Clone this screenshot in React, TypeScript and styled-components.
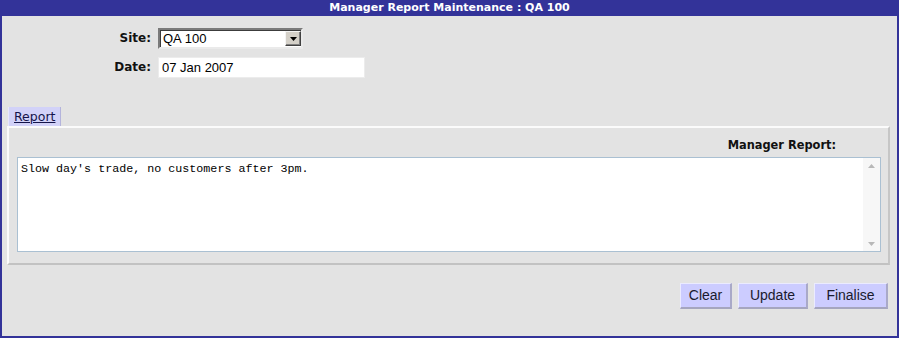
import React from 'react';
import styled, { createGlobalStyle } from 'styled-components';

const GlobalStyle = createGlobalStyle`
  html, body {
    margin: 0;
    padding: 0;
    background: #e3e3e3;
  }
  * {
    box-sizing: border-box;
  }
`;

const Frame = styled.div`
  width: 899px;
  height: 338px;
  display: flex;
  flex-direction: column;
  background: #e3e3e3;
  border: 2px solid #333399;
  border-top: none;
  font-family: 'DejaVu Sans', Verdana, sans-serif;
`;

const TitleBar = styled.div`
  height: 16px;
  margin: 0 -2px;
  background: #333399;
  color: #fff;
  font-size: 11px;
  font-weight: bold;
  line-height: 15px;
  text-align: center;
`;

const FormGrid = styled.div`
  display: grid;
  grid-template-columns: 149px auto;
  column-gap: 7px;
  row-gap: 8px;
  margin-top: 12px;
  justify-content: start;
`;

const Label = styled.label`
  font-size: 12px;
  font-weight: bold;
  color: #111;
  text-align: right;
  padding-top: 3px;
`;

const SelectBox = styled.div`
  width: 145px;
  height: 21px;
  display: flex;
  align-items: stretch;
  background: #fff;
  border-style: solid;
  border-width: 2px;
  border-color: #7a7a7a #eaeaea #eaeaea #7a7a7a;
  box-shadow: inset 1px 1px 0 #3c3c3c;
`;

const SelectText = styled.span`
  flex: 1;
  padding: 1px 0 0 3px;
  font-family: 'Liberation Sans', Arial, sans-serif;
  font-size: 13px;
  line-height: 16px;
  color: #000;
`;

const ArrowButton = styled.span`
  width: 16px;
  margin: 1px 0 1px 0;
  display: flex;
  align-items: center;
  justify-content: center;
  background: #d4d0c8;
  border-style: solid;
  border-width: 1px;
  border-color: #f4f4f4 #404040 #404040 #f4f4f4;
  box-shadow: inset -1px -1px 0 #808080;
`;

const TextInput = styled.div`
  width: 207px;
  height: 21px;
  background: #fff;
  border: 1px solid #ececec;
  padding: 2px 0 0 3px;
  font-family: 'Liberation Sans', Arial, sans-serif;
  font-size: 13px;
  line-height: 16px;
  color: #000;
`;

const TabRow = styled.div`
  display: flex;
  margin: 29px 0 0 6px;
`;

const Tab = styled.a`
  height: 19px;
  padding: 1px 5px 0 5px;
  background: #d2d2f8;
  border-left: 1px solid #e6e6ff;
  border-right: 1px solid #b4b4dc;
  font-size: 12.5px;
  line-height: 17px;
  color: #14144a;
  text-decoration: underline;
`;

const Panel = styled.div`
  margin: 0 7px 0 5px;
  padding: 10px 7px 11px 8px;
  border-style: solid;
  border-width: 2px;
  border-color: #fbfbfb #c6c6c6 #c2c2c2 #fbfbfb;
  display: flex;
  flex-direction: column;
`;

const PanelLabel = styled.div`
  font-size: 11.4px;
  font-weight: bold;
  color: #111;
  text-align: right;
  padding-right: 45px;
  line-height: 15px;
  margin-bottom: 4px;
`;

const TextFrame = styled.div`
  height: 95px;
  display: flex;
  background: #fff;
  border: 1px solid #aac0d2;
`;

const ReportText = styled.textarea`
  flex: 1;
  border: none;
  outline: none;
  resize: none;
  overflow: hidden;
  padding: 4px 3px;
  font-family: 'Liberation Mono', 'Courier New', monospace;
  font-size: 11.7px;
  line-height: 14px;
  color: #000;
  background: transparent;
`;

const ScrollTrack = styled.div`
  width: 17px;
  display: flex;
  flex-direction: column;
  justify-content: space-between;
  align-items: center;
  padding: 6px 0 5px;
  background: #f7f7f7;
`;

const Buttons = styled.div`
  display: flex;
  justify-content: flex-end;
  gap: 6px;
  margin: 18px 9px 0 0;
`;

const Button = styled.button<{ $w: number }>`
  width: ${(p) => p.$w}px;
  height: 26px;
  padding: 0 0 2px;
  background: #ccccff;
  border-style: solid;
  border-width: 1px 2px 2px 1px;
  border-color: #ebebff #a9a9c8 #a5a5bf #ebebff;
  font-family: 'Liberation Sans', Arial, sans-serif;
  font-size: 14px;
  color: #1a1a2e;
`;

const Arrow = ({ up, color }: { up?: boolean; color: string }) => (
  <svg width="7" height="4" viewBox="0 0 7 4">
    <path d={up ? 'M0 4 L3.5 0 L7 4 Z' : 'M0 0 L3.5 4 L7 0 Z'} fill={color} />
  </svg>
);

export default function App() {
  return (
    <>
      <GlobalStyle />
      <Frame>
        <TitleBar>Manager Report Maintenance : QA 100</TitleBar>
        <FormGrid>
          <Label>Site:</Label>
          <SelectBox>
            <SelectText>QA 100</SelectText>
            <ArrowButton>
              <Arrow color="#000" />
            </ArrowButton>
          </SelectBox>
          <Label>Date:</Label>
          <TextInput>07 Jan 2007</TextInput>
        </FormGrid>
        <TabRow>
          <Tab>Report</Tab>
        </TabRow>
        <Panel>
          <PanelLabel>Manager Report:</PanelLabel>
          <TextFrame>
            <ReportText defaultValue="Slow day's trade, no customers after 3pm." />
            <ScrollTrack>
              <Arrow up color="#b8b8b8" />
              <Arrow color="#b8b8b8" />
            </ScrollTrack>
          </TextFrame>
        </Panel>
        <Buttons>
          <Button $w={52}>Clear</Button>
          <Button $w={70}>Update</Button>
          <Button $w={74}>Finalise</Button>
        </Buttons>
      </Frame>
    </>
  );
}
